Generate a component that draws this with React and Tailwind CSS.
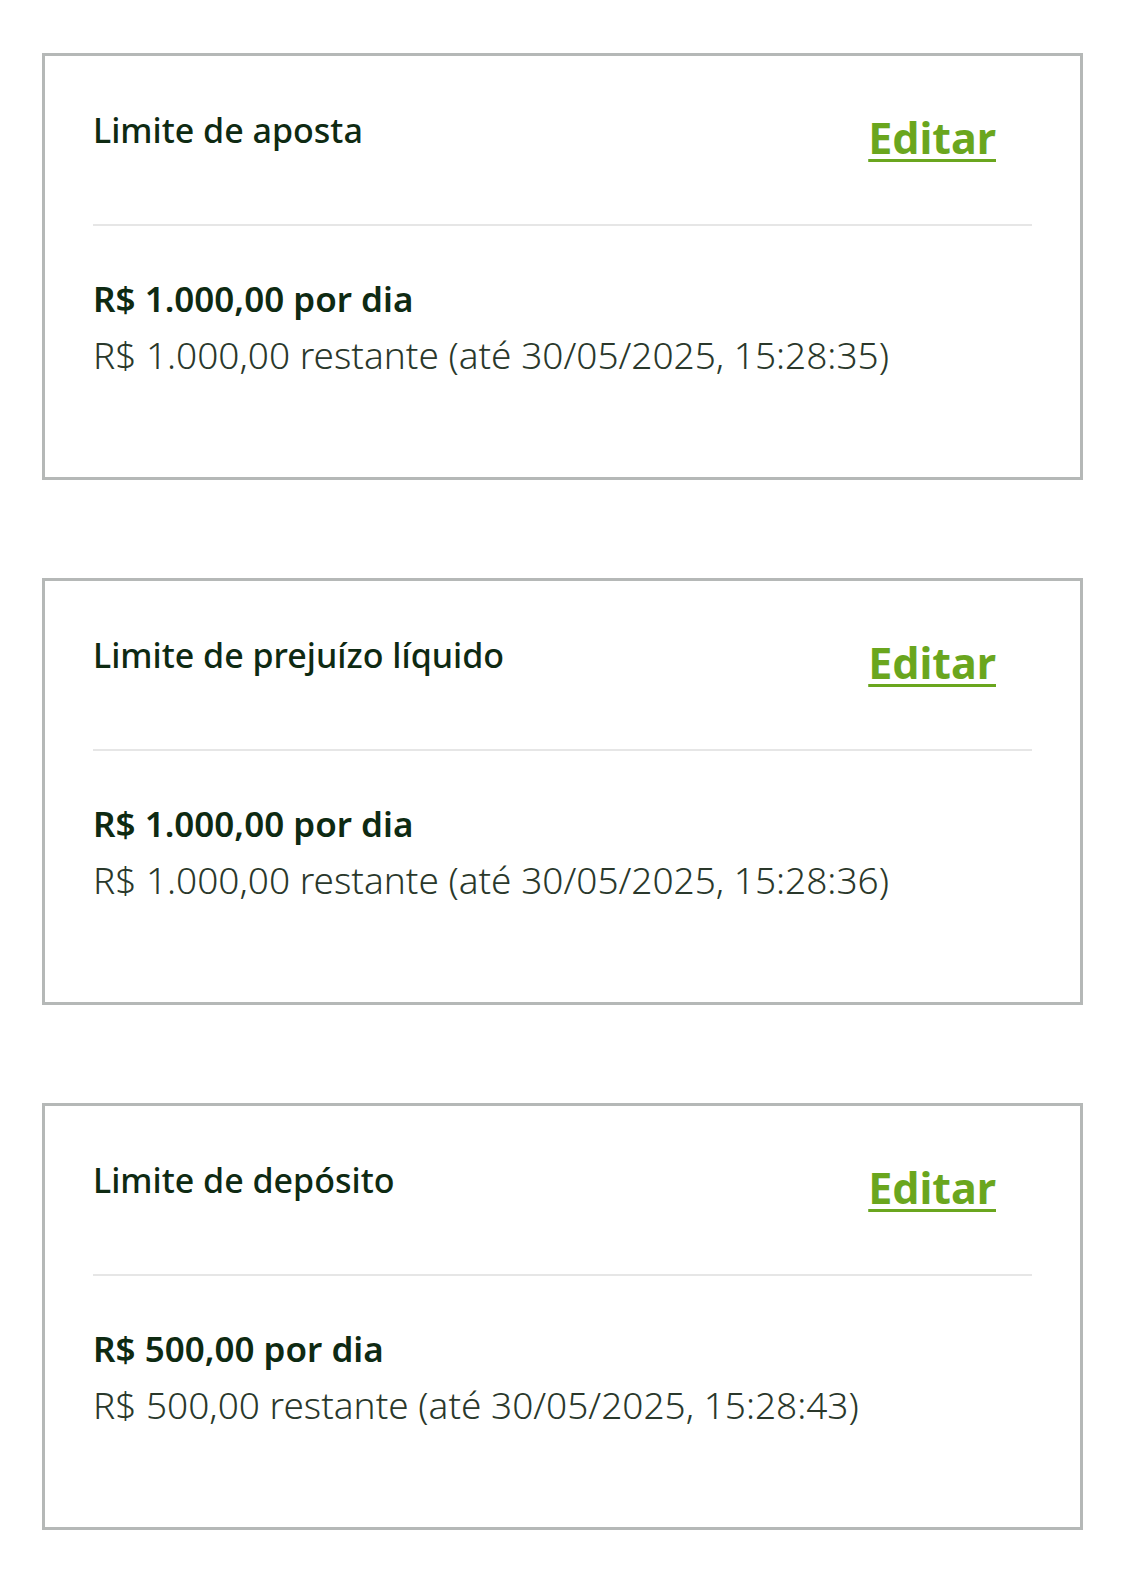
const limits = [
  {
    title: "Limite de aposta",
    amount: "R$ 1.000,00 por dia",
    remaining: "R$ 1.000,00 restante (até 30/05/2025, 15:28:35)",
  },
  {
    title: "Limite de prejuízo líquido",
    amount: "R$ 1.000,00 por dia",
    remaining: "R$ 1.000,00 restante (até 30/05/2025, 15:28:36)",
  },
  {
    title: "Limite de depósito",
    amount: "R$ 500,00 por dia",
    remaining: "R$ 500,00 restante (até 30/05/2025, 15:28:43)",
  },
];

const LimitCard = ({ title, amount, remaining }) => (
  <div className="border-[3px] border-[#b5b8b7] bg-white px-12 h-[427px]">
    <div className="flex items-start justify-between h-[168px] pt-[53px]">
      <h2 className="text-[34px] leading-[42px] font-medium text-[#0e2a12]">
        {title}
      </h2>
      <a
        href="#"
        className="mr-9 mt-[2px] text-[43px] leading-[54px] font-bold text-[#6aa61e] underline decoration-[3px] underline-offset-[5px]"
      >
        Editar
      </a>
    </div>
    <div className="h-[2px] bg-[#e6e6e6]" />
    <div className="pt-[47px]">
      <p className="text-[35px] leading-[52px] font-semibold text-[#0e2a12]">
        {amount}
      </p>
      <p className="mt-[3px] text-[37px] leading-[54px] font-light text-[#2a382b]">
        {remaining}
      </p>
    </div>
  </div>
);

export default function App() {
  return (
    <div
      className="min-h-[1594px] bg-white px-[42px] pt-[53px] flex flex-col gap-[98px]"
      style={{ fontFamily: '"Noto Sans", "Open Sans", sans-serif' }}
    >
      {limits.map((l) => (
        <LimitCard key={l.title} {...l} />
      ))}
    </div>
  );
}
